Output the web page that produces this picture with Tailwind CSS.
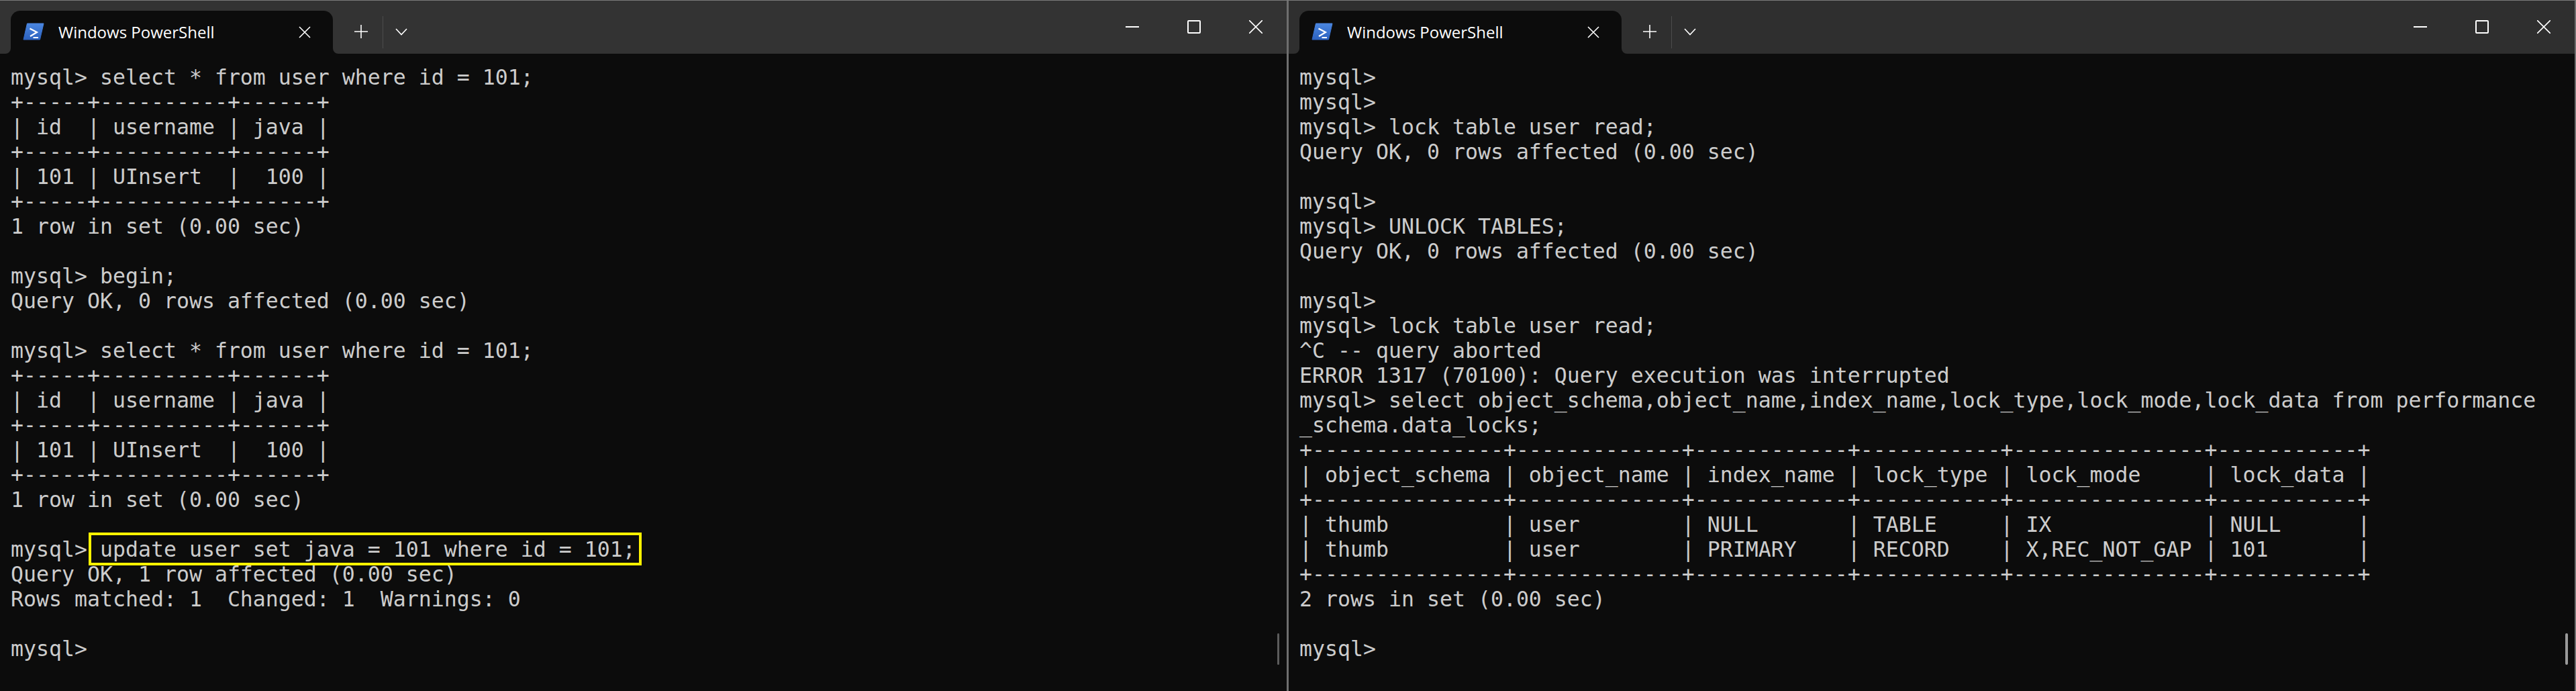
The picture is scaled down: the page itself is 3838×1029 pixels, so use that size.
<!DOCTYPE html>
<html lang="en">
<head>
  <meta charset="UTF-8" />
  <title>Windows PowerShell</title>
  <script src="https://cdn.jsdelivr.net/npm/@tailwindcss/browser@4"></script>
</head>
<body class="h-screen overflow-hidden bg-[#0c0c0c]">
  <div class="h-px bg-[#7a7a7a]"></div>
  <div class="flex h-[1028px]">

    <!-- Left window -->
    <section class="relative w-[1917px] flex flex-col">
      <header class="flex h-[79px] bg-[#333333]">
        <div class="relative ml-4 mt-[15px] flex h-16 w-[480px] items-center rounded-t-[14px] bg-[#0c0c0c] font-['Open_Sans',sans-serif] text-[24px] text-white">
          <div class="absolute -left-2 bottom-0 h-2 w-2 bg-[#0c0c0c]"><div class="h-2 w-2 rounded-br-lg bg-[#333333]"></div></div>
          <div class="absolute -right-2 bottom-0 h-2 w-2 bg-[#0c0c0c]"><div class="h-2 w-2 rounded-bl-lg bg-[#333333]"></div></div>
          <svg class="ml-[18px] mt-[-3px]" width="32" height="26" viewBox="0 0 32 26"><defs><linearGradient id="psA" x1="0" y1="0" x2="0" y2="1"><stop offset="0" stop-color="#4a86e0"/><stop offset="1" stop-color="#2c62bf"/></linearGradient></defs><path d="M6.5 1H31L25.5 25H1Z" fill="url(#psA)" stroke="url(#psA)" stroke-linejoin="round"/><path d="M10.5 8.5 21 14 11 20" fill="none" stroke="#fff" stroke-width="2.2"/><path d="M15.5 22H23" stroke="#fff" stroke-width="2"/></svg>
          <span class="ml-[21px] w-[357px] leading-none">Windows PowerShell</span>
          <svg class="absolute left-[429px] top-[23px]" width="18" height="18" viewBox="0 0 18 18"><path d="M1 1 17 17M17 1 1 17" stroke="#fff" stroke-width="1.6"/></svg>
        </div>
        <button class="ml-[20px] mt-[15px] flex h-16 w-11 items-center justify-center"><svg class="-mt-[3px]" width="20" height="20" viewBox="0 0 20 20"><path d="M10 0V20M0 10H20" stroke="#fff" stroke-width="1.6"/></svg></button>
        <div class="ml-[10px] mt-[23px] h-12 w-px bg-[#4c4c4c]"></div>
        <button class="mt-[15px] flex h-16 w-[53px] items-center justify-center"><svg class="-mt-[1px]" width="18" height="11" viewBox="0 0 18 11"><path d="M1 1 9 9.5 17 1" fill="none" stroke="#fff" stroke-width="1.6"/></svg></button>
        <div class="flex-1"></div>
        <button class="flex h-[78px] w-[92px] items-center justify-center"><svg width="20" height="20" viewBox="0 0 20 20"><path d="M0 10H20" stroke="#fff" stroke-width="2"/></svg></button>
        <button class="flex h-[78px] w-[92px] items-center justify-center"><span class="h-5 w-5 rounded-[2px] border-2 border-white"></span></button>
        <button class="flex h-[78px] w-[92px] items-center justify-center"><svg width="20" height="20" viewBox="0 0 20 20"><path d="M0 0 20 20M20 0 0 20" stroke="#fff" stroke-width="1.6"/></svg></button>
      </header>
      <pre class="pl-4 pt-[17px] font-['DejaVu_Sans_Mono',monospace] text-[31.55px] leading-[37px] text-[#cccccc]">mysql&gt; select * from user where id = 101;
+-----+----------+------+
| id  | username | java |
+-----+----------+------+
| 101 | UInsert  |  100 |
+-----+----------+------+
1 row in set (0.00 sec)

mysql&gt; begin;
Query OK, 0 rows affected (0.00 sec)

mysql&gt; select * from user where id = 101;
+-----+----------+------+
| id  | username | java |
+-----+----------+------+
| 101 | UInsert  |  100 |
+-----+----------+------+
1 row in set (0.00 sec)

mysql&gt; <span class="relative">update user set java = 101 where id = 101;<span class="absolute -left-[17px] -right-[9px] -top-[7px] -bottom-[6px] border-4 border-[#fff200]"></span></span>
Query OK, 1 row affected (0.00 sec)
Rows matched: 1  Changed: 1  Warnings: 0

mysql&gt;</pre>
      <div class="absolute right-[11px] top-[942px] h-[47px] w-[3px] rounded-full bg-[#5c5c5c]"></div>
    </section>

    <div class="w-[3px] bg-[#6e6e6e]"></div>

    <!-- Right window -->
    <section class="relative flex flex-1 flex-col border-r-2 border-[#6e6e6e]">
      <header class="flex h-[79px] bg-[#2f2f2f]">
        <div class="relative ml-4 mt-[15px] flex h-16 w-[480px] items-center rounded-t-[14px] bg-[#0c0c0c] font-['Open_Sans',sans-serif] text-[24px] text-white">
          <div class="absolute -left-2 bottom-0 h-2 w-2 bg-[#0c0c0c]"><div class="h-2 w-2 rounded-br-lg bg-[#2f2f2f]"></div></div>
          <div class="absolute -right-2 bottom-0 h-2 w-2 bg-[#0c0c0c]"><div class="h-2 w-2 rounded-bl-lg bg-[#2f2f2f]"></div></div>
          <svg class="ml-[18px] mt-[-3px]" width="32" height="26" viewBox="0 0 32 26"><defs><linearGradient id="psB" x1="0" y1="0" x2="0" y2="1"><stop offset="0" stop-color="#4a86e0"/><stop offset="1" stop-color="#2c62bf"/></linearGradient></defs><path d="M6.5 1H31L25.5 25H1Z" fill="url(#psB)" stroke="url(#psB)" stroke-linejoin="round"/><path d="M10.5 8.5 21 14 11 20" fill="none" stroke="#fff" stroke-width="2.2"/><path d="M15.5 22H23" stroke="#fff" stroke-width="2"/></svg>
          <span class="ml-[21px] w-[357px] leading-none">Windows PowerShell</span>
          <svg class="absolute left-[429px] top-[23px]" width="18" height="18" viewBox="0 0 18 18"><path d="M1 1 17 17M17 1 1 17" stroke="#fff" stroke-width="1.6"/></svg>
        </div>
        <button class="ml-[20px] mt-[15px] flex h-16 w-11 items-center justify-center"><svg class="-mt-[3px]" width="20" height="20" viewBox="0 0 20 20"><path d="M10 0V20M0 10H20" stroke="#fff" stroke-width="1.6"/></svg></button>
        <div class="ml-[10px] mt-[23px] h-12 w-px bg-[#4c4c4c]"></div>
        <button class="mt-[15px] flex h-16 w-[53px] items-center justify-center"><svg class="-mt-[1px]" width="18" height="11" viewBox="0 0 18 11"><path d="M1 1 9 9.5 17 1" fill="none" stroke="#fff" stroke-width="1.6"/></svg></button>
        <div class="flex-1"></div>
        <button class="flex h-[78px] w-[92px] items-center justify-center"><svg width="20" height="20" viewBox="0 0 20 20"><path d="M0 10H20" stroke="#fff" stroke-width="2"/></svg></button>
        <button class="flex h-[78px] w-[92px] items-center justify-center"><span class="h-5 w-5 rounded-[2px] border-2 border-white"></span></button>
        <button class="flex h-[78px] w-[92px] items-center justify-center"><svg width="20" height="20" viewBox="0 0 20 20"><path d="M0 0 20 20M20 0 0 20" stroke="#fff" stroke-width="1.6"/></svg></button>
      </header>
      <pre class="pl-4 pt-[17px] font-['DejaVu_Sans_Mono',monospace] text-[31.55px] leading-[37px] text-[#cccccc]">mysql&gt;
mysql&gt;
mysql&gt; lock table user read;
Query OK, 0 rows affected (0.00 sec)

mysql&gt;
mysql&gt; UNLOCK TABLES;
Query OK, 0 rows affected (0.00 sec)

mysql&gt;
mysql&gt; lock table user read;
^C -- query aborted
ERROR 1317 (70100): Query execution was interrupted
mysql&gt; select object_schema,object_name,index_name,lock_type,lock_mode,lock_data from performance
_schema.data_locks;
+---------------+-------------+------------+-----------+---------------+-----------+
| object_schema | object_name | index_name | lock_type | lock_mode     | lock_data |
+---------------+-------------+------------+-----------+---------------+-----------+
| thumb         | user        | NULL       | TABLE     | IX            | NULL      |
| thumb         | user        | PRIMARY    | RECORD    | X,REC_NOT_GAP | 101       |
+---------------+-------------+------------+-----------+---------------+-----------+
2 rows in set (0.00 sec)

mysql&gt;</pre>
      <div class="absolute right-[10px] top-[942px] h-[47px] w-1 rounded-full bg-[#9a9a9a]"></div>
    </section>
  </div>
</body>
</html>
